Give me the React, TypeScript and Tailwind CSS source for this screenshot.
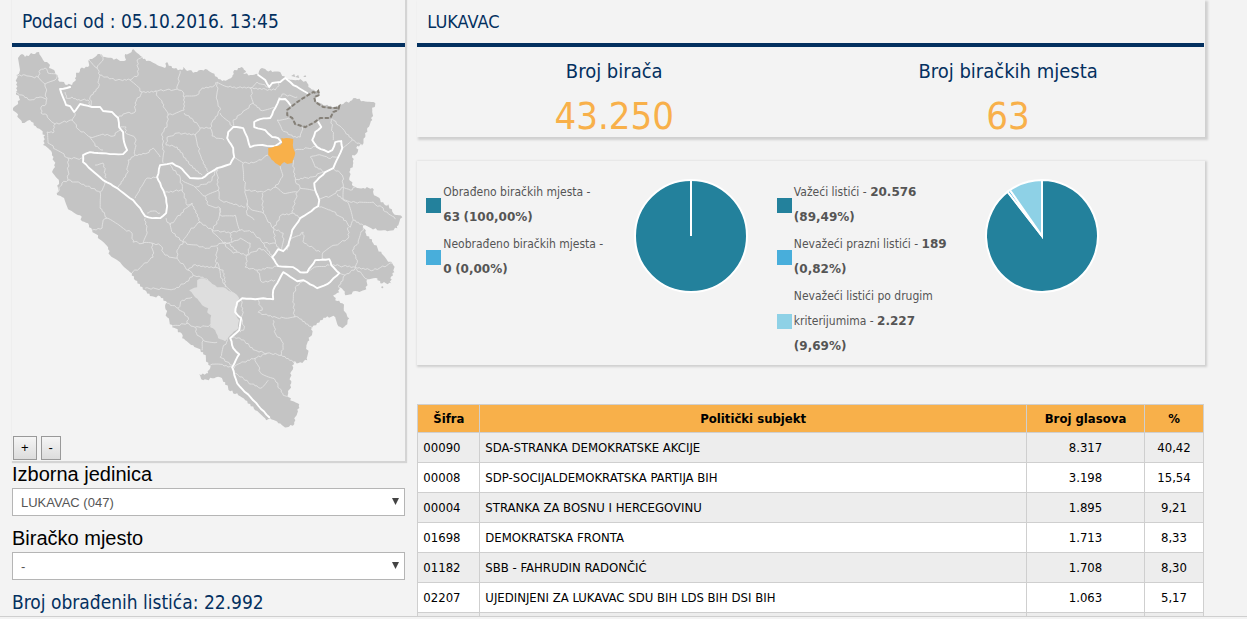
import { useId } from "react";

type Result = {
  code: string;
  name: string;
  votes: string;
  share: string;
};

type Slice = {
  label: string;
  value: number;
  count: string;
  percent: string;
  fill: string;
  swatch: string;
};

const results: Result[] = [
  { code: "00090", name: "SDA-STRANKA DEMOKRATSKE AKCIJE", votes: "8.317", share: "40,42" },
  { code: "00008", name: "SDP-SOCIJALDEMOKRATSKA PARTIJA BIH", votes: "3.198", share: "15,54" },
  { code: "00004", name: "STRANKA ZA BOSNU I HERCEGOVINU", votes: "1.895", share: "9,21" },
  { code: "01698", name: "DEMOKRATSKA FRONTA", votes: "1.713", share: "8,33" },
  { code: "01182", name: "SBB - FAHRUDIN RADONČIĆ", votes: "1.708", share: "8,30" },
  { code: "02207", name: "UJEDINJENI ZA LUKAVAC SDU BIH LDS BIH DSI BIH", votes: "1.063", share: "5,17" },
];

const stations: Slice[] = [
  { label: "Obrađeno biračkih mjesta", value: 63, count: "63", percent: "100,00%", fill: "#23819c", swatch: "bg-[#23819c]" },
  { label: "Neobrađeno biračkih mjesta", value: 0, count: "0", percent: "0,00%", fill: "#48aedb", swatch: "bg-[#48aedb]" },
];

const ballots: Slice[] = [
  { label: "Važeći listići", value: 20576, count: "20.576", percent: "89,49%", fill: "#23819c", swatch: "bg-[#23819c]" },
  { label: "Nevažeći prazni listići", value: 189, count: "189", percent: "0,82%", fill: "#48aedb", swatch: "bg-[#48aedb]" },
  { label: "Nevažeći listići po drugim kriterijumima", value: 2227, count: "2.227", percent: "9,69%", fill: "#8ed1e6", swatch: "bg-[#8ed1e6]" },
];

/* ---------- map ---------- */

const country =
  "18,58 22,54 25,57 31,53 35,54 39,52 43,60 47,62 50,65 49,68 55,72 58,77 58,80 67,85 72,85 76,80 76,75 80,69 88,67 90,59 95,57 100,54 105,57 112,58 120,61 126,60 125,54 130,53 133,49 137,53 142,57 143,59 150,61 157,65 165,68 167,62 172,68 182,70 183,67 187,71 195,72 200,70 205,69 212,73 217,77 222,81 227,80 232,77 233,72 238,68 243,68 246,72 243,74 252,75 258,75 260,69 265,69 272,72 280,72 282,76 288,79 297,80 300,79 307,83 310,88 315,91 317,93 315,100 323,105 338,107 343,104 350,101 355,98 363,101 375,103 372,110 372,120 367,128 365,137 362,145 357,146 357,153 352,155 353,163 349,172 349,180 355,187 363,188 372,188 373,193 380,200 385,205 388,204 393,213 402,217 398,225 397,228 387,231 377,230 363,225 365,232 373,243 383,255 393,265 394,272 390,278 391,283 380,283 377,278 367,279 366,289 357,291 345,295 343,290 338,287 339,292 333,295 335,300 342,303 345,312 349,318 347,324 342,328 337,324 335,317 327,316 320,320 312,327 312,333 307,343 307,360 300,362 293,362 293,367 290,373 291,383 288,393 290,400 299,404 297,413 294,418 294,424 287,427 278,423 270,418 266,420 255,410 245,400 237,393 230,391 225,382 220,377 212,378 203,380 199,374 208,373 210,368 203,352 193,345 182,338 180,332 172,327 167,317 165,307 167,302 160,296 152,296 145,290 135,280 130,272 120,262 110,255 108,247 92,230 88,223 82,221 80,215 70,210 62,197 57,195 59,182 52,172 55,167 52,153 43,145 45,135 37,128 30,120 22,123 13,108 20,100 16,92 17,75 20,70";

const mostar =
  "197,280 202,278 208,280 217,287 223,287 237,295 239,298 236,307 236,315 239,320 238,328 230,335 225,341 218,338 215,330 210,327 211,315 207,312 208,308 202,305 195,297 189,290 197,287";

const lukavac =
  "281,138 286,138 293,139 293,148 295,153 292,163 287,164 284,162 280,166 275,163 268,155 268,148 278,146 282,143";

const brcko =
  "287,110 297,102 303,98 313,92 316,93 318,91 319,95 314,97 315,102 323,107 332,108 336,108 339,106 338,110 333,112 330,118 320,118 313,123 305,127 295,124 292,118 287,115";

const entityLines = [
  "70,87 60,89 66,105 70,106 74,112 80,104 92,107 100,107 103,111 112,112 118,118 119,127 123,132 124,142 127,150 123,154 110,154 90,152 83,155 83,162 103,180 117,188 133,200 140,208 145,216 152,218 160,218 166,213 167,206 166,198 160,183 157,177 160,165 167,164 172,163 182,169 190,178 202,178 217,168 230,164 234,157 233,148 227,138 228,132 233,127 243,128 247,137 250,147 258,145 275,146 281,142 278,138 272,137 265,130 254,127 254,122 260,119 270,118 275,108 279,99 285,99 290,105",
  "258,75 265,80 269,87 272,83 280,82 285,78 293,85 307,93",
  "318,122 321,127 315,132 312,140 317,147 328,152 332,150 335,142 341,141 342,148 338,157 333,168 325,172 314,183 315,190 319,200 318,206 300,218 292,230 288,245 283,251 278,249 272,257 278,266 293,267 300,272 307,272 315,260 329,259 331,265 339,273 327,284 317,288 303,280 297,281 283,272 277,283 273,290 273,299 263,298 255,299 242,298 237,302 235,312 241,318 239,330 230,338 233,348 239,354 232,367 237,383 253,400 269,417",
];

const municipalities = [
  "16,75 25,75 33,77 38,77 40,70 45,68 48,73 57,75 55,80 45,84 38,77",
  "16,92 22,95 30,100 40,97 46,99",
  "45,84 46,92 46,104 41,107 41,113 47,115 50,120 55,124",
  "55,124 72,120 75,113",
  "55,124 53,133 47,132 48,143 68,158 83,159",
  "72,120 78,129 90,137 103,134 113,136 120,130",
  "90,137 95,146 103,150",
  "68,158 68,180 62,183 57,193",
  "68,180 80,183 100,192 100,208 107,218",
  "100,192 105,182",
  "89,60 97,68 100,75 98,88 90,97 91,107",
  "100,54 103,60 97,68",
  "100,75 117,80 130,80 142,92 135,103 135,112 123,114 118,118",
  "130,80 138,75 137,60 142,57",
  "142,92 155,91 162,103 168,115 167,125 162,133 163,147 163,163",
  "155,91 177,89 183,92 184,110 168,115",
  "177,89 180,71",
  "184,97 197,95 202,88 212,87 216,82",
  "184,113 193,120 200,128 210,128",
  "200,128 195,135 177,133 167,137 166,145 177,147 190,165 202,175",
  "195,135 198,147 202,160 208,172",
  "135,155 128,160 127,173 118,187",
  "119,127 126,127 125,132 135,138 135,155 147,153 153,148 160,157",
  "157,177 147,178 140,188 135,198",
  "170,165 180,177 182,190 165,192",
  "182,180 195,187 210,182 217,168",
  "182,190 187,205 192,203",
  "65,92 66,98 72,97 77,100 88,100 91,107",
  "95,165 103,163 106,178",
  "217,82 217,100 220,110 212,122 210,128 212,136 224,140",
  "217,82 228,87 250,88 257,82 268,87",
  "250,88 253,103 242,113 233,120 233,127",
  "250,88 275,90 280,82",
  "275,108 260,110 253,103",
  "278,98 282,94 297,97",
  "220,113 233,127",
  "217,168 218,190 220,200 230,203 245,207",
  "195,187 205,196 218,190",
  "234,157 243,163 255,162 268,155",
  "243,163 245,190 247,203 247,215 254,220",
  "245,190 263,192 275,187 282,177 280,166",
  "293,160 295,180 300,188 315,190",
  "275,187 283,193 297,192 300,188",
  "295,150 307,148 317,147",
  "277,120 282,130 293,137",
  "277,120 292,118",
  "302,127 300,137 293,137",
  "295,180 310,177 325,172",
  "338,157 328,158 317,155 310,157 315,167 325,172",
  "332,119 338,125 345,132 352,140 342,148",
  "333,140 331,119",
  "352,140 362,145",
  "333,168 342,175 343,187 350,190 355,187",
  "343,187 332,195 318,200",
  "343,187 343,200 357,203 373,202 387,212 395,219",
  "337,194 348,203 353,220 363,225",
  "319,207 330,210 343,218 350,227 353,220",
  "348,227 348,238 335,245 323,252 322,260",
  "363,228 358,243 352,250 357,260 355,268",
  "331,265 355,267 373,270 392,263",
  "355,268 367,279",
  "339,273 345,275 355,268",
  "345,275 338,287",
  "307,272 314,267 329,265",
  "303,280 295,287 293,300 294,317",
  "258,300 262,310 258,312 272,317 287,318 298,317 312,328",
  "273,320 275,333 283,343 281,355 295,362",
  "281,355 267,353 255,350 240,338 230,337",
  "267,353 255,358 260,372 275,380 283,395 288,396",
  "255,358 240,363 232,368",
  "235,373 248,382 260,388 268,380",
  "287,250 290,240 303,232 304,243 320,252",
  "272,257 260,248 247,255 245,267 257,270 262,282 275,280",
  "257,270 278,266",
  "223,243 228,243 237,252 247,255 250,243 240,238 232,242",
  "240,230 235,215 220,215 220,208",
  "240,230 230,233 232,242 223,243",
  "240,230 253,232 263,243 272,257",
  "247,203 252,210 263,213 273,228 275,243",
  "262,193 263,213",
  "273,228 283,233 282,250",
  "263,243 275,243 279,249",
  "297,192 292,213 300,218",
  "273,228 281,215 292,213",
  "217,262 223,283 238,297",
  "241,300 243,312 241,318 244,328 240,332",
  "107,218 103,220 102,228 92,230",
  "107,218 132,233 133,242 143,243 152,243 153,257 132,273",
  "145,218 147,232 143,243",
  "152,243 160,245 165,255 177,258 188,270 193,275 185,283 173,289 145,288",
  "166,218 173,233 183,242 177,250 177,258",
  "170,225 181,213 192,203",
  "183,242 190,230 200,222 192,203",
  "183,242 207,248 223,243 233,253 237,252",
  "217,247 215,267 193,265 188,270",
  "193,275 199,276 208,280",
  "215,267 223,270 225,287",
  "200,222 212,230 218,220 220,208 208,205 205,196",
  "212,230 223,243",
  "212,230 230,233",
  "167,303 178,308 182,300 192,297",
  "178,308 188,317 187,323 172,326",
  "187,323 195,327 212,325",
  "195,327 197,335 203,340 202,350",
  "203,340 217,342",
  "227,338 220,357 232,365",
  "210,365 220,364 232,367",
  "147,213 152,211 160,213",
];

// Breaks long segments into short uneven ones so borders read as hand-surveyed.
function rough(points: string, step: number, amount: number) {
  const pts = points.split(" ").map((p) => p.split(",").map(Number));
  const out: string[] = [`${pts[0][0]},${pts[0][1]}`];
  for (let i = 1; i < pts.length; i++) {
    const [x0, y0] = pts[i - 1];
    const [x1, y1] = pts[i];
    const length = Math.hypot(x1 - x0, y1 - y0) || 1;
    const parts = Math.max(1, Math.round(length / step));
    for (let k = 1; k < parts; k++) {
      const seed = Math.sin(x0 * 12.9 + y1 * 78.2 + k * 37.7) * 43758.5;
      const shift = (seed - Math.floor(seed) - 0.5) * 2 * amount;
      const t = k / parts;
      const x = x0 + (x1 - x0) * t - ((y1 - y0) / length) * shift;
      const y = y0 + (y1 - y0) * t + ((x1 - x0) / length) * shift;
      out.push(`${x.toFixed(1)},${y.toFixed(1)}`);
    }
    out.push(`${x1},${y1}`);
  }
  return out.join(" ");
}

function BosniaMap() {
  return (
    <svg viewBox="12 47 393 389" className="block w-full" role="img" aria-label="Bosna i Hercegovina">
      <polygon points={rough(country, 2, 1.3)} fill="#c4c4c4" />
      <circle cx="382" cy="287" r="1" fill="#c4c4c4" />
      <path d="M291 76l3-2 1 3 3-2 1 3M303 77l2-2 1 2z" fill="#c4c4c4" />
      <g fill="none" stroke="#e2e2e2" strokeWidth="0.9" strokeLinejoin="round">
        {municipalities.map((line) => (
          <polyline key={line} points={rough(line, 2, 1)} />
        ))}
      </g>
      <polygon points={rough(mostar, 3, 0.6)} fill="#dedede" />
      <g fill="none" stroke="#fff" strokeWidth="1.9" strokeLinejoin="round" strokeLinecap="round">
        {entityLines.map((line) => (
          <polyline key={line} points={rough(line, 4, 0.4)} />
        ))}
      </g>
      <polygon points={brcko} fill="#c4c4c4" stroke="#b4b2b0" strokeWidth="1.4" />
      <polygon points={brcko} fill="none" stroke="#858078" strokeWidth="2" strokeDasharray="4 2" />
      <polygon points={rough(lukavac, 3, 0.5)} fill="#f8b04a" />
    </svg>
  );
}

/* ---------- charts ---------- */

function Pie({ slices, title }: { slices: Slice[]; title: string }) {
  const total = slices.reduce((sum, s) => sum + s.value, 0);
  const point = (fraction: number) => {
    const a = fraction * Math.PI * 2;
    return `${57 + 56 * Math.sin(a)} ${57 - 56 * Math.cos(a)}`;
  };
  let start = 0;

  return (
    <svg width="114" height="114" viewBox="0 0 114 114" className="shrink-0" role="img" aria-label={title}>
      <g stroke="#fff" strokeWidth="2">
        {slices.map((slice) => {
          const size = slice.value / total;
          const from = start;
          start += size;
          if (size === 0) return null;
          if (size === 1) {
            return (
              <g key={slice.label}>
                <circle cx="57" cy="57" r="56" fill={slice.fill} />
                <path d="M57 57V1" />
              </g>
            );
          }
          return (
            <path
              key={slice.label}
              d={`M57 57L${point(from)}A56 56 0 ${size > 0.5 ? 1 : 0} 1 ${point(start)}Z`}
              fill={slice.fill}
            />
          );
        })}
      </g>
    </svg>
  );
}

function Chart({ slices, title }: { slices: Slice[]; title: string }) {
  return (
    <div className="flex w-[44.5%] items-start pl-[9px]">
      <ul className="flex w-52 shrink-0 flex-col gap-0.5 py-px">
        {slices.map((slice) => (
          <li key={slice.label} className="flex items-center gap-0.5">
            <span className={`size-[15px] shrink-0 ${slice.swatch}`} />
            <span className="w-[165px] text-[12px] leading-[25px] text-[#555]">
              {`${slice.label} - `}
              <strong className="font-['DejaVu_Sans',sans-serif]">{slice.count}</strong>{" "}
              <strong className="font-['DejaVu_Sans',sans-serif]">{`(${slice.percent})`}</strong>
            </span>
          </li>
        ))}
      </ul>
      <Pie slices={slices} title={title} />
    </div>
  );
}

/* ---------- form ---------- */

function Picker({ label, value }: { label: string; value: string }) {
  const id = useId();
  return (
    <div className="font-['Liberation_Sans',Arial,sans-serif]">
      <label htmlFor={id} className="block text-[20px] leading-[27px] text-black">
        {label}
      </label>
      <div className="relative">
        <select
          id={id}
          defaultValue={value}
          className="block h-7 w-full appearance-none border border-[#b5b5b5] bg-white px-2 text-[13px] text-[#555]"
        >
          <option value={value}>{value}</option>
        </select>
        <svg viewBox="0 0 7 7" className="pointer-events-none absolute right-1.5 top-2.5 size-[7px]" aria-hidden="true">
          <path d="M0 0h7L3.5 7z" fill="#444" />
        </svg>
      </div>
    </div>
  );
}

function Figure({ label, value }: { label: string; value: string }) {
  return (
    <div className="text-center">
      <p className="text-[20px] leading-[48px] text-[#03305f]">{label}</p>
      <p className="text-[38px] leading-[42px] text-[#f8b04a]">{value}</p>
    </div>
  );
}

const zoomButton =
  "h-6 border border-[#999] bg-linear-to-b from-[#f5f5f5] to-[#dcdcdc] px-[7px] font-['Liberation_Sans',Arial,sans-serif] text-[13px] leading-5 text-black";
const cell = "border border-[#cfcfcf] px-[5px]";

export default function App() {
  return (
    <div className="flex h-screen flex-col bg-[#f3f3f3] font-['DejaVu_Sans_Condensed','DejaVu_Sans',sans-serif]">
      <main className="grid min-h-0 flex-1 grid-cols-[1fr_2fr] items-start gap-3 overflow-hidden border-b border-[#cfcfcf] pl-3 pr-[43px]">
        <aside>
          <section className="shadow-[1px_1px_1px_1px_#d4d4d4]">
            <h2 className="border-b-4 border-[#03305f] bg-[#f3f3f3] px-2.5 text-[19px] leading-[43px] text-[#03305f]">
              Podaci od : 05.10.2016. 13:45
            </h2>
            <BosniaMap />
            <div className="flex gap-1 px-px pb-px">
              <button type="button" className={zoomButton} aria-label="Uvećaj">
                +
              </button>
              <button type="button" className={zoomButton} aria-label="Umanji">
                -
              </button>
            </div>
          </section>
          <div className="flex flex-col gap-[9px]">
            <Picker label="Izborna jedinica" value="LUKAVAC (047)" />
            <Picker label="Biračko mjesto" value="-" />
            <p className="text-[19px] leading-[27px] text-[#03305f]">Broj obrađenih listića: 22.992</p>
          </div>
        </aside>

        <div>
          <section className="-mr-px mb-6 shadow-[2px_2px_2px_1px_#d0d0d0]">
            <h2 className="mr-px border-b-4 border-[#03305f] px-2.5 text-[18px] leading-[43px] text-[#03305f]">
              LUKAVAC
            </h2>
            <div className="grid grid-cols-2">
              <Figure label="Broj birača" value="43.250" />
              <Figure label="Broj biračkih mjesta" value="63" />
            </div>
          </section>

          <section className="-mr-px mb-[39px] flex pb-[5px] pt-[18px] shadow-[1px_1px_2px_1px_#cfcfcf]">
            <Chart slices={stations} title="Obrađena biračka mjesta" />
            <Chart slices={ballots} title="Listići" />
          </section>

          <table className="w-full table-fixed border-collapse text-[13px] text-black">
            <colgroup>
              <col className="w-[62px]" />
              <col />
              <col className="w-[118px]" />
              <col className="w-[59px]" />
            </colgroup>
            <thead>
              <tr className="h-7 bg-[#f8b04a]">
                <th className={cell}>Šifra</th>
                <th className={cell}>Politički subjekt</th>
                <th className={cell}>Broj glasova</th>
                <th className={cell}>%</th>
              </tr>
            </thead>
            <tbody>
              {results.map((row) => (
                <tr key={row.code} className="h-[30px] odd:bg-[#ededed] even:bg-white">
                  <td className={cell}>{row.code}</td>
                  <td className={cell}>{row.name}</td>
                  <td className={`${cell} text-center`}>{row.votes}</td>
                  <td className={`${cell} text-center`}>{row.share}</td>
                </tr>
              ))}
              <tr className="h-[30px] bg-[#ededed]">
                <td className={cell} />
                <td className={cell} />
                <td className={cell} />
                <td className={cell} />
              </tr>
            </tbody>
          </table>
        </div>
      </main>
      <div className="h-0.5 shrink-0" />
    </div>
  );
}
